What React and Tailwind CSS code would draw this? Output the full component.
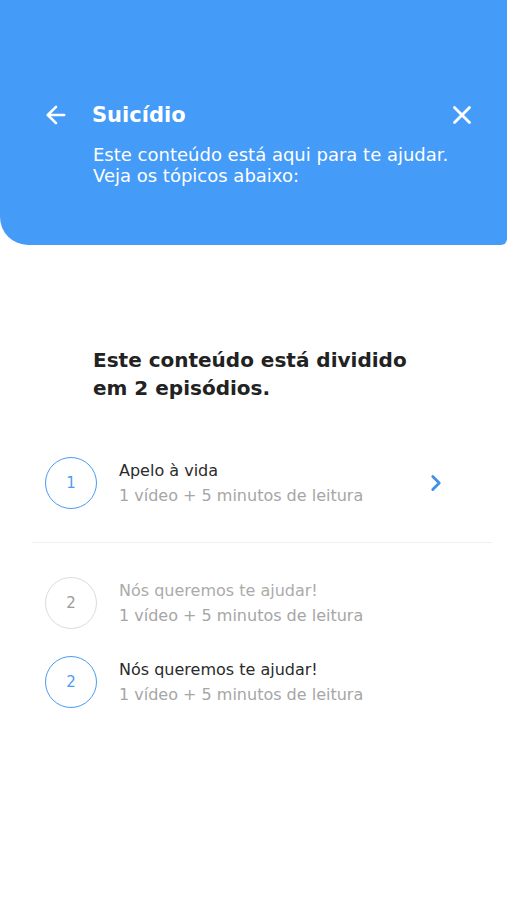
import { ArrowLeft, X, ChevronRight } from "lucide-react";

const font = { fontFamily: '"DejaVu Sans", "Open Sans", sans-serif' };

const episodes = [
  { n: 1, title: "Apelo à vida", state: "active", arrow: true },
  { n: 2, title: "Nós queremos te ajudar!", state: "locked" },
  { n: 2, title: "Nós queremos te ajudar!", state: "active" },
];

function Episode({ n, title, state, arrow }) {
  const locked = state === "locked";
  return (
    <div className="flex items-center">
      <div
        className={`flex h-[52px] w-[52px] shrink-0 items-center justify-center rounded-full border-[1.5px] text-[15px] ${
          locked ? "border-[#dcdcdc] text-[#9a9a9a]" : "border-[#4a9cf6] text-[#4a9cf6]"
        }`}
      >
        {n}
      </div>
      <div className="ml-[22px] flex-1">
        <p className={`text-[16px] leading-[25px] ${locked ? "text-[#ababab]" : "text-[#2b2b2b]"}`}>
          {title}
        </p>
        <p className="text-[16px] leading-[25px] text-[#a6a6a6]">1 vídeo + 5 minutos de leitura</p>
      </div>
      {arrow && <ChevronRight className="mr-[58px] h-[26px] w-[26px] text-[#3f91ec]" strokeWidth={2.6} />}
    </div>
  );
}

export default function App() {
  return (
    <div className="min-h-screen bg-white" style={font}>
      <header className="h-[245px] rounded-bl-[28px] rounded-br-[6px] bg-[#449bf8] pt-[100px] text-white">
        <div className="flex items-center px-[42px]">
          <ArrowLeft className="h-[28px] w-[28px]" strokeWidth={2.2} />
          <h1 className="ml-[22px] flex-1 text-[21px] font-semibold leading-[30px]">Suicídio</h1>
          <X className="-mr-[12px] h-[30px] w-[30px]" strokeWidth={2.2} />
        </div>
        <p className="mt-[14px] pl-[93px] text-[18px] leading-[21px]">
          Este conteúdo está aqui para te ajudar.
          <br />
          Veja os tópicos abaixo:
        </p>
      </header>

      <h2 className="mt-[101px] pl-[93px] text-[20px] font-semibold leading-[28px] text-[#222]">
        Este conteúdo está dividido
        <br />
        em 2 episódios.
      </h2>

      <div className="mt-[55px] pl-[45px]">
        <Episode {...episodes[0]} />
      </div>
      <div className="ml-[32px] mr-[15px] mt-[33px] h-px bg-[#f0f0f0]" />
      <div className="mt-[34px] flex flex-col gap-[27px] pl-[45px]">
        <Episode {...episodes[1]} />
        <Episode {...episodes[2]} />
      </div>
    </div>
  );
}
